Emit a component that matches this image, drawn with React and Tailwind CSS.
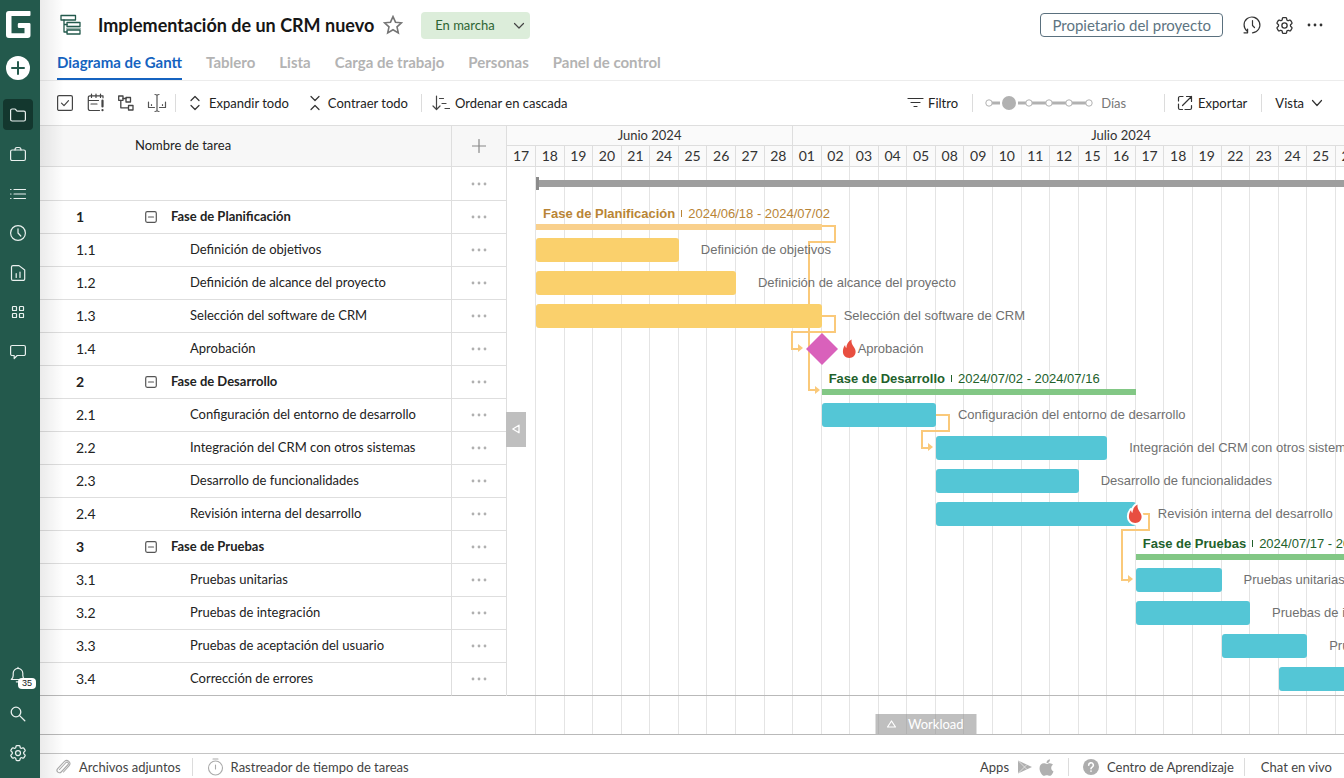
import React from "react";
import { HiOutlineCog6Tooth } from "react-icons/hi2";
import { FaApple } from "react-icons/fa";

const rows = [
  { id: "0", kind: "project", from: 2, to: 34 },
  { id: "1", kind: "phase", name: "Fase de Planificación", from: 2, to: 12, dates: "2024/06/18 - 2024/07/02", tone: "amber" },
  { id: "1.1", kind: "task", name: "Definición de objetivos", from: 2, to: 7, tone: "amber" },
  { id: "1.2", kind: "task", name: "Definición de alcance del proyecto", from: 2, to: 9, tone: "amber" },
  { id: "1.3", kind: "task", name: "Selección del software de CRM", from: 2, to: 12, tone: "amber" },
  { id: "1.4", kind: "milestone", name: "Aprobación", from: 12, to: 13 },
  { id: "2", kind: "phase", name: "Fase de Desarrollo", from: 12, to: 23, dates: "2024/07/02 - 2024/07/16", tone: "green" },
  { id: "2.1", kind: "task", name: "Configuración del entorno de desarrollo", from: 12, to: 16, tone: "cyan" },
  { id: "2.2", kind: "task", name: "Integración del CRM con otros sistemas", from: 16, to: 22, tone: "cyan" },
  { id: "2.3", kind: "task", name: "Desarrollo de funcionalidades", from: 16, to: 21, tone: "cyan" },
  { id: "2.4", kind: "task", name: "Revisión interna del desarrollo", from: 16, to: 23, tone: "cyan", urgent: true },
  { id: "3", kind: "phase", name: "Fase de Pruebas", from: 23, to: 31, dates: "2024/07/17 - 2024/07/26", tone: "green" },
  { id: "3.1", kind: "task", name: "Pruebas unitarias", from: 23, to: 26, tone: "cyan" },
  { id: "3.2", kind: "task", name: "Pruebas de integración", from: 23, to: 27, tone: "cyan" },
  { id: "3.3", kind: "task", name: "Pruebas de aceptación del usuario", from: 26, to: 29, tone: "cyan" },
  { id: "3.4", kind: "task", name: "Corrección de errores", from: 28, to: 31, tone: "cyan" },
];

const days = (
  "17 18 19 20 21 24 25 26 27 28 " +
  "01 02 03 04 05 08 09 10 11 12 15 16 17 18 19 22 23 24 25 26 29 30 31"
).split(" ");

const timeline = "grid w-[943px] grid-cols-[29px_repeat(32,minmax(0,1fr))]";

const barTone = { amber: "bg-[#fad06c]", cyan: "bg-[#54c6d6]" };
const phaseBar = { amber: "bg-[#f9d08c]", green: "bg-[#82c785]" };
const phaseText = { amber: "text-[#b98536]", green: "text-[#22612b]" };

function Svg({ w, h, children, className = "", sw = 1.2 }) {
  return (
    <svg
      width={w}
      height={h}
      viewBox={`0 0 ${w} ${h}`}
      fill="none"
      stroke="currentColor"
      strokeWidth={sw}
      strokeLinecap="round"
      strokeLinejoin="round"
      aria-hidden="true"
      className={`shrink-0 ${className}`}
    >
      {children}
    </svg>
  );
}

function Dots({ className }) {
  return (
    <svg width="16" height="4" viewBox="0 0 16 4" fill="currentColor" aria-hidden="true" className={className}>
      <circle cx="2" cy="2" r="1.400" />
      <circle cx="8" cy="2" r="1.400" />
      <circle cx="14" cy="2" r="1.400" />
    </svg>
  );
}

function Flame({ outlined }) {
  return (
    <svg width="18" height="24" viewBox="0 0 18 24" aria-hidden="true" className="block shrink-0">
      <path
        d="M11.600 2.600c-.5 3.200.6 5 1.900 6.900 1.500 2 2.100 3.600 2.100 5.300 0 3.700-2.700 6.200-6.300 6.200s-6.400-2.500-6.400-6.200c0-2.400.6-4.600 2.200-6.700.1 1.500.5 2.300 1.200 3 .3-3.700 1.900-6.700 5.300-8.500z"
        fill="#e84e40"
        stroke={outlined ? "#fff" : "none"}
        strokeWidth="4"
        paintOrder="stroke"
        strokeLinejoin="round"
      />
    </svg>
  );
}

function Separator() {
  return <span className="h-[18px] w-px bg-[#dcdcdc]" />;
}

function SideButton({ label, active, children }) {
  return (
    <button
      type="button"
      aria-label={label}
      className={`relative flex h-[31px] w-[30px] items-center justify-center rounded text-[#eaf1ef] ${active ? "bg-[#13372e]" : ""}`}
    >
      {children}
    </button>
  );
}

function Sidebar() {
  return (
    <aside className="flex w-10 shrink-0 flex-col items-start bg-[#23594c] px-[3px] pt-[10px] pb-[10px]">
      <a href="#inicio" aria-label="GanttPRO" className="ml-[2px] block">
        <svg width="26" height="29" viewBox="0 0 26 29" aria-hidden="true">
          <path
            d="M24.800 1a.7.7 0 0 1 .7.7V5a1 1 0 0 1-1 1H6.500v17.200h13V18h-5.400a1.300 1.300 0 0 1-1.300-1.300v-2.400A1.300 1.300 0 0 1 14.100 13h10.100a1.300 1.300 0 0 1 1.300 1.300v11a2.700 2.700 0 0 1-2.700 2.700H3.900A2.900 2.900 0 0 1 1 25.100V3.900A2.900 2.900 0 0 1 3.900 1z"
            fill="#fff"
          />
        </svg>
      </a>
      <button type="button" aria-label="Crear" className="mt-4 ml-[2px]">
        <svg width="26" height="26" viewBox="0 0 26 26" aria-hidden="true" className="block">
          <circle cx="13" cy="13" r="12" fill="#fff" />
          <path d="M13 7v12M7 13h12" stroke="#23594c" strokeWidth="2" strokeLinecap="round" />
        </svg>
      </button>
      <nav className="mt-[18px] flex h-[268px] flex-col justify-between" aria-label="Principal">
        <SideButton label="Proyectos" active>
          <Svg w={18} h={18}>
            <path d="M1.600 13.500V4.500A1.500 1.500 0 0 1 3.100 3h2.600c.9 0 1 .4 1.500 1.200.4.700.7 1 1.500 1h6.200a1.500 1.500 0 0 1 1.500 1.500v6.800a1.500 1.500 0 0 1-1.500 1.500H3.100a1.500 1.500 0 0 1-1.500-1.500z" />
          </Svg>
        </SideButton>
        <SideButton label="Portafolios">
          <Svg w={18} h={18}>
            <rect x="1.600" y="5" width="14.800" height="10.500" rx="1.500" />
            <path d="M6 5c0-1.600.6-2.500 2-2.500h2c1.400 0 2 .9 2 2.500" />
          </Svg>
        </SideButton>
        <SideButton label="Mis tareas">
          <Svg w={18} h={18}>
            <path d="M5 4.500h11.500M5 9h11.500M5 13.500h11.500M1.600 4.500h.4M1.600 9h.4M1.600 13.500h.4" />
          </Svg>
        </SideButton>
        <SideButton label="Registro de tiempo">
          <Svg w={18} h={18}>
            <circle cx="9" cy="9" r="7.400" />
            <path d="M9 4.800V9l2.800 3" />
          </Svg>
        </SideButton>
        <SideButton label="Informes">
          <Svg w={18} h={18}>
            <path d="M2.500 3.100a1.500 1.500 0 0 1 1.500-1.500h6L15.700 6v8.900a1.500 1.500 0 0 1-1.500 1.500H4a1.500 1.500 0 0 1-1.500-1.500zM7.200 9.500v4M11 8v5.500" />
          </Svg>
        </SideButton>
        <SideButton label="Aplicaciones">
          <Svg w={18} h={18}>
            <rect x="3.500" y="3.500" width="4" height="4" rx=".6" />
            <rect x="10.500" y="3.500" width="4" height="4" rx=".6" />
            <rect x="3.500" y="10.500" width="4" height="4" rx=".6" />
            <rect x="10.500" y="10.500" width="4" height="4" rx=".6" />
          </Svg>
        </SideButton>
        <SideButton label="Comentarios">
          <Svg w={18} h={18}>
            <path d="M3.100 2.500h11.800a1.500 1.500 0 0 1 1.500 1.500v7a1.500 1.500 0 0 1-1.500 1.500H8.200l-3 3v-3H3.100A1.500 1.500 0 0 1 1.600 11V4a1.500 1.500 0 0 1 1.500-1.500z" />
          </Svg>
        </SideButton>
      </nav>
      <div className="mt-auto flex flex-col gap-2">
        <SideButton label="Notificaciones">
          <Svg w={18} h={18}>
            <path d="M9 1.300v1M2.300 13.500c1.400-1.200 1.900-2.300 1.900-4V7.200a4.800 4.800 0 0 1 9.600 0v2.300c0 1.700.5 2.800 1.900 4zM7.300 15.800h2" />
          </Svg>
          <span className="absolute top-[19px] left-[15px] flex h-[11px] w-[18px] items-center justify-center rounded-sm bg-white font-['Liberation_Sans',sans-serif] text-[9px] leading-[11px] text-[#222]">
            35
          </span>
        </SideButton>
        <SideButton label="Buscar">
          <Svg w={18} h={18} sw={1.300}>
            <circle cx="7" cy="7" r="4.800" />
            <path d="M10.600 10.600L15.800 15.800" />
          </Svg>
        </SideButton>
        <SideButton label="Ajustes">
          <HiOutlineCog6Tooth size={20} />
        </SideButton>
      </div>
    </aside>
  );
}

function Header() {
  return (
    <header className="flex h-[50px] items-center pr-[21px] pl-5">
      <Svg w={22} h={22} className="text-[#23594c]" sw={1.300}>
        <rect x="1" y="1.500" width="14.500" height="4.500" />
        <path d="M4 6v12h3M4 10.500h3" />
        <rect x="7" y="8.500" width="13" height="4" />
        <path d="M7 14.500h13" stroke="#9bb5ae" strokeWidth="2" />
        <rect x="7" y="16" width="13" height="4" />
      </Svg>
      <h1 className="ml-4 text-[18px] leading-6 font-bold text-[#161616]">Implementación de un CRM nuevo</h1>
      <button type="button" aria-label="Favorito" className="ml-[9px] text-[#757575]">
        <Svg w={20} h={20} sw={1.600}>
          <path d="M10 1.600l2.500 5.600 6 .6-4.500 4.100 1.300 6L10 14.800l-5.300 3.100 1.300-6L1.500 7.800l6-.6z" strokeLinejoin="miter" />
        </Svg>
      </button>
      <div className="relative ml-[18px]">
        <select
          aria-label="Estado del proyecto"
          className="block h-[27px] w-[109px] appearance-none rounded bg-[#dcedda] pl-[14px] text-[13px] leading-5 text-[#2d6433]"
        >
          <option>En marcha</option>
        </select>
        <Svg w={12} h={8} className="pointer-events-none absolute top-[10px] right-[5px] text-[#444]">
          <path d="M1.500 1.500L6 6l4.500-4.500" />
        </Svg>
      </div>
      <button
        type="button"
        className="ml-auto h-6 rounded border border-[#5a707e] px-[11px] text-[15px] leading-5 text-[#5d7482]"
      >
        Propietario del proyecto
      </button>
      <button type="button" aria-label="Historial" className="ml-[20px] text-[#333]">
        <Svg w={19} h={20}>
          <path d="M4.200 16.200A7.900 7.900 0 1 1 9.500 17.800M1 17.800h3.600v-3.700M9.500 5.500v5l2 2" />
        </Svg>
      </button>
      <button type="button" aria-label="Ajustes del proyecto" className="ml-3 text-[#333]">
        <HiOutlineCog6Tooth size={21} />
      </button>
      <button type="button" aria-label="Más opciones" className="ml-3 text-[#333]">
        <Dots />
      </button>
    </header>
  );
}

function Tabs() {
  const rest = ["Tablero", "Lista", "Carga de trabajo", "Personas", "Panel de control"];
  return (
    <nav className="flex h-[31px] gap-6 border-b border-[#ececec] pl-[17px] text-[15px] leading-6 font-bold" aria-label="Vistas">
      <a href="#gantt" aria-current="page" className="h-[30px] border-b-2 border-[#1563c0] text-[#1563c0]">
        Diagrama de Gantt
      </a>
      {rest.map((t) => (
        <a key={t} href="#vista" className="text-[#b3b3b3]">
          {t}
        </a>
      ))}
    </nav>
  );
}

function Toolbar() {
  const stops = [4, 44, 64, 84, 104];
  return (
    <div className="flex h-[44px] items-center pr-5 pl-4 text-[13px] leading-5 text-[#222]">
      <button type="button" aria-label="Seleccionar tareas">
        <Svg w={18} h={18} className="text-[#444]">
          <rect x="1.600" y="1.600" width="14.800" height="14.800" rx="1.500" />
          <path d="M5.500 9.200l2.500 2.500 4.500-5" />
        </Svg>
      </button>
      <button type="button" aria-label="Tareas vencidas" className="ml-3">
        <Svg w={19} h={20} className="text-[#444]" sw={1.200}>
          <path d="M13.500 17.500H4a1.700 1.700 0 0 1-1.700-1.700V4.500A1.700 1.700 0 0 1 4 2.800h13v2M5.500 1v3.500M10 1v3.500M14.500 1v3.500M2.500 7.500h10M5 11h6" />
          <path d="M16.500 7.500v6M16.500 17v.2" strokeWidth="2.200" />
        </Svg>
      </button>
      <button type="button" aria-label="Ruta crítica" className="ml-3">
        <Svg w={18} h={18} className="text-[#444]" sw={1.300}>
          <rect x="1.700" y="2" width="4.300" height="4.300" />
          <rect x="9" y="3.500" width="4.500" height="4.500" />
          <rect x="11.500" y="11.500" width="4.500" height="4.500" />
          <path d="M6 4.500h3M3.800 6.300v7.500h7.700" />
        </Svg>
      </button>
      <button type="button" aria-label="Línea base" className="ml-3">
        <Svg w={20} h={20} className="text-[#555]">
          <path d="M10 2.500v15M8 1.500c1.200 0 2 .4 2 1.200 0-.8.800-1.200 2-1.200M8 18.500c1.200 0 2-.4 2-1.200 0 .8.800 1.200 2 1.200M1.500 9v5.500h6M18.500 9v5.500h-6M4.500 11.500v1M15.500 11.500v1" />
        </Svg>
      </button>
      <span className="ml-2 flex">
        <Separator />
      </span>
      <button type="button" className="ml-[13px] flex items-center gap-2">
        <Svg w={12} h={16} className="text-[#333]">
          <path d="M2 5.500L6 1.500l4 4M2 10.500l4 4 4-4" />
        </Svg>
        Expandir todo
      </button>
      <button type="button" className="ml-5 flex items-center gap-[7px]">
        <Svg w={12} h={16} className="text-[#333]">
          <path d="M2 1.500l4 4 4-4M2 14.500l4-4 4 4" />
        </Svg>
        Contraer todo
      </button>
      <span className="ml-[13px] flex">
        <Separator />
      </span>
      <button type="button" className="ml-[10px] flex items-center gap-[5px]">
        <Svg w={18} h={16} className="text-[#444]">
          <path d="M4.500 1v13.500M1 11l3.500 3.500L8 11M7.500 3.500h4M10 8.500h4M13 13.500h4.500" />
        </Svg>
        Ordenar en cascada
      </button>

      <button type="button" className="ml-auto flex items-center gap-1">
        <Svg w={17} h={12} className="text-[#333]">
          <path d="M1 1.500h15M4 5.500h9M7 9.500h3" />
        </Svg>
        Filtro
      </button>
      <span className="ml-[14px] flex">
        <Separator />
      </span>
      <label className="ml-3 flex items-center gap-2 text-[#777]">
        <span className="relative flex">
          <svg width="108" height="16" viewBox="0 0 108 16" aria-hidden="true">
            <path d="M4 8h100" stroke="#b1b1b1" strokeWidth="3" />
            <rect x="15" y="5" width="18" height="6" fill="#fff" />
            {stops.map((x) => (
              <circle key={x} cx={x} cy="8" r="3.200" fill="#fff" stroke="#b1b1b1" />
            ))}
            <circle cx="24" cy="8" r="7" fill="#b1b1b1" />
          </svg>
          <input type="range" min="0" max="5" defaultValue="1" aria-label="Escala de tiempo" className="absolute inset-0 w-full opacity-0" />
        </span>
        Días
      </label>
      <span className="ml-[38px] flex">
        <Separator />
      </span>
      <button type="button" className="ml-3 flex items-center gap-[5px]">
        <Svg w={16} h={16} className="text-[#333]">
          <path d="M6 1.500H3A1.500 1.500 0 0 0 1.500 3v3M1.500 9v4A1.500 1.500 0 0 0 3 14.500h2.500M8 14.500h5a1.500 1.500 0 0 0 1.500-1.500v-2.500M5.500 10.500l9-9M9.500 1.500h5v5" />
        </Svg>
        Exportar
      </button>
      <span className="ml-[14px] flex">
        <Separator />
      </span>
      <button type="button" className="ml-[13px] flex items-center gap-[6px]">
        Vista
        <Svg w={14} h={8} className="text-[#333]">
          <path d="M2.500 1.500l4.500 5 4.500-5" />
        </Svg>
      </button>
    </div>
  );
}

function TaskTable() {
  return (
    <table className="w-[467px] shrink-0 table-fixed border-separate border-spacing-0 border-r border-[#dedede] text-[13px] text-[#222]">
      <colgroup>
        <col className="w-[95px]" />
        <col />
        <col className="w-[54px]" />
      </colgroup>
      <thead>
        <tr className="h-[41px] bg-[#f7f7f7]">
          <th className="border-b border-[#dedede]" aria-label="Número" />
          <th className="border-r border-b border-[#dedede] p-0 pb-[2px] text-left leading-5 font-normal">Nombre de tarea</th>
          <th className="border-b border-[#dedede] p-0">
            <button type="button" aria-label="Añadir columna" className="mx-auto flex text-[#888]">
              <Svg w={14} h={14}>
                <path d="M7 .5v13M.5 7h13" />
              </Svg>
            </button>
          </th>
        </tr>
      </thead>
      <tbody>
        {rows.map((r, i) => {
          const line = i === rows.length - 1 ? "border-b-[#b9b9b9]" : "border-b-[#dedede]";
          const phase = r.kind === "phase";
          return (
            <tr key={r.id} className={`${i === 0 ? "h-[34px]" : "h-[33px]"} ${phase ? "font-bold" : ""}`}>
              <td className={`border-b ${line} py-0 pr-0 pl-9 text-[14px] leading-5`}>{i === 0 ? "" : r.id}</td>
              <td className={`border-r border-b border-r-[#dedede] ${line} overflow-hidden p-0 pb-[2px] leading-5 whitespace-nowrap`}>
                {phase ? (
                  <span className="flex items-center gap-[14px] pl-[10px]">
                    <button type="button" aria-label={`Contraer ${r.name}`} className="pt-[2px] text-[#555]">
                      <Svg w={12} h={12} className="block">
                        <rect x=".7" y=".7" width="10.600" height="10.600" rx="1.500" />
                        <path d="M3.500 6h5" />
                      </Svg>
                    </button>
                    {r.name}
                  </span>
                ) : (
                  <span className="pl-[55px]">{r.name}</span>
                )}
              </td>
              <td className={`border-b ${line} p-0`}>
                <button type="button" aria-label="Opciones de tarea" className="mx-auto flex text-[#b0b0b0]">
                  <Dots />
                </button>
              </td>
            </tr>
          );
        })}
      </tbody>
    </table>
  );
}

function TimelineRow({ row }) {
  const span = { gridColumn: `${row.from} / ${row.to}`, gridRow: 1 };
  const after = { gridColumn: `${row.to} / -1`, gridRow: 1 };

  if (row.kind === "project") {
    return (
      <div className={`${timeline} h-[34px] items-center pb-[2px]`}>
        <div style={span} className="flex items-center">
          <span className="h-[13px] w-[3px] bg-[#8b8b8b]" />
          <span className="h-[7px] flex-1 bg-[#9e9e9e]" />
        </div>
      </div>
    );
  }
  if (row.kind === "phase") {
    return (
      <div className={`${timeline} h-[33px]`}>
        <div style={span} className="flex flex-col pt-[3px]">
          <div className={`flex h-5 items-center pb-[1px] pl-[7px] whitespace-nowrap ${phaseText[row.tone]}`}>
            <strong>{row.name}</strong>
            <span className="mr-[6px] ml-[6px] h-[7px] w-px shrink-0 bg-current" />
            {row.dates}
          </div>
          <div className={`h-[6px] ${phaseBar[row.tone]}`} />
        </div>
      </div>
    );
  }
  if (row.kind === "milestone") {
    return (
      <div className={`${timeline} h-[33px]`}>
        <div style={{ gridColumn: `${row.from} / -1`, gridRow: 1 }} className="-ml-4 flex items-center pb-[4px]">
          <svg width="32" height="32" viewBox="0 0 32 32" aria-hidden="true" className="shrink-0">
            <path d="M16 0L32 16 16 32 0 16z" fill="#d961bb" />
          </svg>
          <span className="ml-[2px] flex">
            <Flame />
          </span>
          {row.name}
        </div>
      </div>
    );
  }
  return (
    <div className={`${timeline} h-[33px]`}>
      <div style={span} className="flex items-center justify-end pb-[1px]">
        <div className={`h-6 w-full rounded-[3px] ${barTone[row.tone]}`} />
        {row.urgent && (
          <span className="absolute -mr-2">
            <Flame outlined />
          </span>
        )}
      </div>
      <div style={after} className="flex items-center pb-[2px] pl-[22px] whitespace-nowrap">
        {row.name}
      </div>
    </div>
  );
}

function Connectors() {
  return (
    <svg width="943" height="529" viewBox="0 0 943 529" aria-hidden="true" className="absolute top-0 left-0">
      <g fill="none" stroke="#fac97a" strokeWidth="2">
        <path d="M315 59h13v16h-26v148h7" />
        <path d="M315 149h13v16h-43v17h7" />
        <path d="M428 248h14v16h-27v17h7" />
        <path d="M634 347h8v16h-27v50h7" />
      </g>
      <g fill="#fac97a">
        <path d="M308 219l5 4-5 4z" />
        <path d="M291 177l5 4-5 4z" />
        <path d="M421 276l5 4-5 4z" />
        <path d="M621 408l5 4-5 4z" />
      </g>
    </svg>
  );
}

function Chart() {
  return (
    <section className="relative flex min-w-0 flex-1 flex-col overflow-hidden" aria-label="Cronograma">
      <div className={`${timeline} bg-[#fafafa] text-center text-[#333]`}>
        <div className="col-span-10 h-5 border-r border-b border-[#dedede] text-[13px] leading-[19px]">Junio 2024</div>
        <div className="col-span-23 h-5 border-r border-b border-[#dedede] text-[13px] leading-[19px]">Julio 2024</div>
        {days.map((d, i) => (
          <div key={i} className="h-[21px] border-r border-b border-[#dedede] text-[14px] leading-5">
            {d}
          </div>
        ))}
      </div>
      <div className="relative flex-1">
        <div className={`${timeline} absolute inset-y-0 left-0`}>
          {days.map((d, i) => (
            <span key={i} className="border-r border-[#e4e4e4]" />
          ))}
        </div>
        <Connectors />
        <div className="relative border-b border-[#b9b9b9] font-['Liberation_Sans',Arial,sans-serif] text-[13px] leading-4 text-[#707070]">
          {rows.map((r, i) => (
            <div key={r.id} className={i === rows.length - 1 ? "-mb-px" : ""}>
              <TimelineRow row={r} />
            </div>
          ))}
        </div>
      </div>
      <button
        type="button"
        className="absolute bottom-0 left-1/2 flex h-5 w-[101px] -translate-x-1/2 items-center bg-[#8b8b8b]/55 pl-[10px] text-[13px] leading-5 text-white"
      >
        <Svg w={12} h={10} className="mr-[11px]">
          <path d="M6 2L10 8H2z" />
        </Svg>
        Workload
      </button>
    </section>
  );
}

function Footer() {
  return (
    <footer className="flex h-[25px] items-center border-t border-[#c4c4c4] pt-[2px] pr-3 pl-4 text-[13px] leading-5 text-[#444]">
      <a href="#archivos" className="flex items-center gap-2">
        <Svg w={15} h={16} className="text-[#aaa]" sw={1.100}>
          <path d="M3.500 10.500l6.500-7a1.500 1.500 0 0 1 2.200 2l-7 7.500a2.400 2.400 0 0 1-3.500-3.300L8.500 2.300a3.200 3.200 0 0 1 4.700 4.300L7.500 13" />
        </Svg>
        Archivos adjuntos
      </a>
      <span className="ml-[11px] flex">
        <Separator />
      </span>
      <a href="#rastreador" className="ml-[14px] flex items-center gap-[7px]">
        <Svg w={17} h={18} className="text-[#aaa]" sw={1.100}>
          <circle cx="8.500" cy="10" r="7" />
          <path d="M6 1h5M8.500 7v4" />
        </Svg>
        Rastreador de tiempo de tareas
      </a>
      <span className="ml-auto flex items-center">
        Apps
        <a href="#android" aria-label="Google Play" className="ml-2 text-[#b0b0b0]">
          <svg width="16" height="14" viewBox="0 0 16 14" aria-hidden="true">
            <path d="M1 .5L15 7 1 13.500z" fill="currentColor" />
            <path d="M1 .5l9 9M1 13.500l9-9" stroke="#fff" strokeWidth=".6" />
          </svg>
        </a>
        <a href="#ios" aria-label="App Store" className="ml-1 text-[#b0b0b0]">
          <FaApple size={19} />
        </a>
      </span>
      <span className="ml-3 flex">
        <Separator />
      </span>
      <a href="#ayuda" className="ml-[14px] flex items-center gap-2">
        <svg width="16" height="16" viewBox="0 0 16 16" aria-hidden="true">
          <circle cx="8" cy="8" r="8" fill="#adadad" />
          <path d="M5.700 6.200a2.300 2.300 0 1 1 3.500 1.900c-.8.500-1.200.8-1.200 1.700M8 12v.3" fill="none" stroke="#fff" strokeWidth="1.600" strokeLinecap="round" />
        </svg>
        Centro de Aprendizaje
      </a>
      <span className="ml-[10px] flex">
        <Separator />
      </span>
      <a href="#chat" className="ml-4">
        Chat en vivo
      </a>
    </footer>
  );
}

export default function App() {
  return (
    <div className="flex min-h-screen bg-white font-['Lato',sans-serif]">
      <Sidebar />
      <div className="relative flex min-w-0 flex-1 flex-col overflow-hidden">
        <Header />
        <Tabs />
        <Toolbar />
        <main className="relative flex border-y border-t-[#dedede] border-b-[#b9b9b9]">
          <div className="pb-[38px]">
            <TaskTable />
          </div>
          <Chart />
          <button
            type="button"
            aria-label="Ocultar tabla"
            className="absolute top-[286px] left-[466px] flex h-[35px] w-5 items-center justify-center bg-[#bfbfbf] pb-[2px] text-white"
          >
            <Svg w={10} h={10} sw={1.300}>
              <path d="M8 1.200v7.600L1.800 5z" />
            </Svg>
          </button>
        </main>
        <div className="mt-auto">
          <Footer />
        </div>
        <div className="pointer-events-none absolute inset-y-0 left-0 w-6 bg-linear-to-r from-black/8 to-transparent" />
      </div>
    </div>
  );
}
